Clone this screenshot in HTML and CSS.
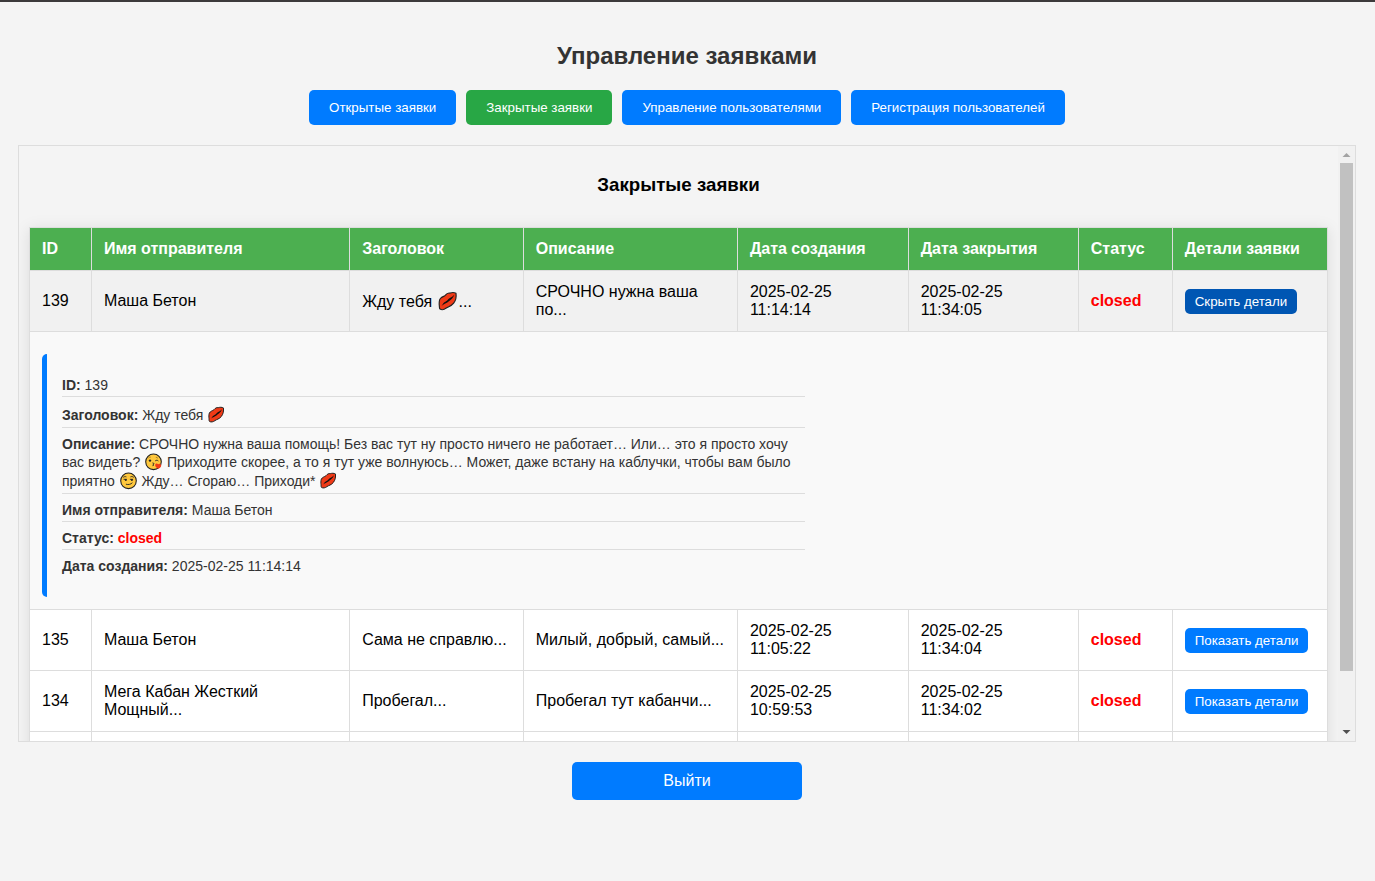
FILE: index.html
```html
<!DOCTYPE html>
<html lang="ru">
<head>
<meta charset="utf-8">
<title>Управление заявками</title>
<link rel="stylesheet" href="styles.css">
</head>
<body>
<svg class="symbols" aria-hidden="true">
  <symbol id="lips" viewBox="0 0 19 19">
    <path d="M1.9 12.6C1.9 10.4 1.7 8.2 3.2 7C4.6 5.7 6 5.7 7.1 4.6C8.4 3 9.8 2.3 11.2 2.7C12.8 2.1 15 2.1 16.4 2.9C16.8 5.6 16.4 8.8 14.4 11.4C12.2 14.2 9.8 14.2 8 15.6C6.2 17 4 17.3 2.6 16.5C1.8 15.8 2.2 14 1.9 12.6Z" fill="#f03a17" stroke="#222" stroke-width="1" stroke-linejoin="round"/>
    <path d="M3.8 13.8C5.2 12.2 5.6 10.6 7.6 9.9C9 9.5 9.4 8 10.8 7.2C12.4 6.4 13.8 5.4 15 4.2C14.2 6 13.4 7.4 11.9 8.4C10.8 9.1 10.2 9.9 8.9 10.8C7.2 11.9 5.4 12.4 3.8 13.8Z" fill="#111"/>
  </symbol>
  <symbol id="kiss" viewBox="0 0 19 19">
    <circle cx="9.5" cy="9.8" r="7.8" fill="#ffc83d" stroke="#222" stroke-width="1.1"/>
    <circle cx="6" cy="8.6" r="1.2" fill="#222"/>
    <path d="M11.2 8.9C12.2 8 13.4 8.1 14.4 9M8.5 10.9C10.2 10.7 10.2 12.1 8.9 12.3C10.2 12.5 10 13.8 8.5 13.7" fill="none" stroke="#222" stroke-width="0.9"/>
    <path d="M4.4 6C5 5.3 5.9 5 6.8 5.1M11.8 5.3C12.7 5.3 13.4 5.7 13.9 6.3" fill="none" stroke="#8a6420" stroke-width="0.7"/>
    <path d="M14.6 16.8C12.2 15.8 10.9 14.3 11.2 12.7C11.6 11.2 13.4 11.1 14.1 12.3C15.1 11.1 17 11.7 17.2 13.2C17.3 14.7 16.2 15.9 14.6 16.8Z" fill="#f03a17"/>
  </symbol>
  <symbol id="smirk" viewBox="0 0 19 19">
    <circle cx="9.5" cy="9.8" r="7.8" fill="#ffc83d" stroke="#222" stroke-width="1.1"/>
    <circle cx="6.8" cy="8.9" r="1" fill="#222"/>
    <circle cx="12.9" cy="8.9" r="1" fill="#222"/>
    <path d="M4.2 6.4C5 5.6 6.2 5.4 7.4 5.9M11.4 5.9C12.6 5.3 13.8 5.5 14.8 6.4M4.6 8.3H7.8M10.9 8.3H14.1M6.9 13.2C9.4 14 11.8 13.4 13.4 11.7" fill="none" stroke="#222" stroke-width="0.9"/>
  </symbol>
</svg>

<main class="page">
  <h1 class="page-title">Управление заявками</h1>
  <nav class="tabs">
    <button class="tab" type="button">Открытые заявки</button>
    <button class="tab tab-active" type="button">Закрытые заявки</button>
    <button class="tab" type="button">Управление пользователями</button>
    <button class="tab" type="button">Регистрация пользователей</button>
  </nav>

  <section class="panel">
    <div class="scroller">
      <h3 class="panel-title">Закрытые заявки</h3>
      <table class="tickets">
        <colgroup>
          <col class="col-id"><col class="col-sender"><col class="col-subject"><col class="col-text">
          <col class="col-created"><col class="col-closed"><col class="col-status"><col class="col-details">
        </colgroup>
        <thead>
          <tr>
            <th>ID</th><th>Имя отправителя</th><th>Заголовок</th><th>Описание</th>
            <th>Дата создания</th><th>Дата закрытия</th><th>Статус</th><th>Детали заявки</th>
          </tr>
        </thead>
        <tbody>
          <tr class="row-open">
            <td>139</td>
            <td>Маша Бетон</td>
            <td>Жду тебя <svg class="emoji" role="img" aria-label="Губы"><use href="#lips"/></svg>...</td>
            <td>СРОЧНО нужна ваша по...</td>
            <td>2025-02-25 11:14:14</td>
            <td>2025-02-25 11:34:05</td>
            <td><span class="status">closed</span></td>
            <td><button class="toggle toggle-open" type="button">Скрыть детали</button></td>
          </tr>
          <tr class="row-details">
            <td colspan="8">
              <div class="details">
                <p><strong>ID:</strong> 139</p>
                <p><strong>Заголовок:</strong> Жду тебя <svg class="emoji emoji-small" role="img" aria-label="Губы"><use href="#lips"/></svg></p>
                <p><strong>Описание:</strong> СРОЧНО нужна ваша помощь! Без вас тут ну просто ничего не работает… Или… это я просто хочу вас видеть? <svg class="emoji emoji-small" role="img" aria-label="Поцелуй"><use href="#kiss"/></svg> Приходите скорее, а то я тут уже волнуюсь… Может, даже встану на каблучки, чтобы вам было приятно <svg class="emoji emoji-small" role="img" aria-label="Ухмылка"><use href="#smirk"/></svg> Жду… Сгораю… Приходи* <svg class="emoji emoji-small" role="img" aria-label="Губы"><use href="#lips"/></svg></p>
                <p><strong>Имя отправителя:</strong> Маша Бетон</p>
                <p><strong>Статус:</strong> <span class="status">closed</span></p>
                <p><strong>Дата создания:</strong> 2025-02-25 11:14:14</p>
              </div>
            </td>
          </tr>
          <tr>
            <td>135</td>
            <td>Маша Бетон</td>
            <td>Сама не справлю...</td>
            <td>Милый, добрый, самый...</td>
            <td>2025-02-25 11:05:22</td>
            <td>2025-02-25 11:34:04</td>
            <td><span class="status">closed</span></td>
            <td><button class="toggle" type="button">Показать детали</button></td>
          </tr>
          <tr>
            <td>134</td>
            <td>Мега Кабан Жесткий Мощный...</td>
            <td>Пробегал...</td>
            <td>Пробегал тут кабанчи...</td>
            <td>2025-02-25 10:59:53</td>
            <td>2025-02-25 11:34:02</td>
            <td><span class="status">closed</span></td>
            <td><button class="toggle" type="button">Показать детали</button></td>
          </tr>
          <tr><td></td><td></td><td></td><td></td><td></td><td></td><td></td><td></td></tr>
        </tbody>
      </table>
    </div>
    <div class="scrollbar" aria-hidden="true">
      <svg class="arrow" viewBox="0 0 17 17"><path d="M4.5 11L8.5 7L12.5 11Z" fill="#a3a3a3"/></svg>
      <div class="track"><div class="thumb"></div></div>
      <svg class="arrow" viewBox="0 0 17 17"><path d="M4.5 6L8.5 10L12.5 6Z" fill="#505050"/></svg>
    </div>
  </section>

  <button class="logout" type="button">Выйти</button>
</main>
</body>
</html>
```
FILE: styles.css
```css
* {
  box-sizing: border-box;
}

body {
  margin: 0;
  min-height: 100vh;
  border-top: 2px solid #3c3a3b;
  background: #f4f4f4;
  font-family: "Liberation Sans", Arial, sans-serif;
}

button {
  border: 0;
  border-radius: 5px;
  background: #007bff;
  color: #fff;
  font-family: inherit;
  cursor: pointer;
}

.symbols {
  display: none;
}

.page {
  display: flex;
  flex-direction: column;
  align-items: center;
  gap: 20px;
  padding: 40px 19px 20px 18px;
}

.page-title {
  margin: 0;
  color: #333;
  font-size: 24px;
  line-height: 28px;
}

.tabs {
  display: flex;
  justify-content: center;
  gap: 10px;
}

.tab {
  padding: 10px 20px;
}

.tab-active {
  background: #28a745;
}

.panel {
  display: flex;
  width: 100%;
  height: calc(100vh - 284px);
  border: 1px solid #ddd;
}

.scroller {
  flex: 1;
  min-width: 0;
  padding: 10px;
  overflow-y: auto;
  scrollbar-width: none;
}

.panel-title {
  margin: 18px 0 31px;
  line-height: 22px;
  text-align: center;
}

.tickets {
  width: 100%;
  table-layout: fixed;
  border-collapse: collapse;
  background: #fff;
  box-shadow: 0 2px 15px rgba(0, 0, 0, 0.1);
}

.col-id { width: 4.77%; }
.col-sender { width: 19.9%; }
.col-subject { width: 13.37%; }
.col-text { width: 16.5%; }
.col-created { width: 13.16%; }
.col-closed { width: 13.1%; }
.col-status { width: 7.24%; }
.col-details { width: 11.96%; }

.tickets th,
.tickets td {
  padding: 12px;
  border: 1px solid #ddd;
  line-height: 18px;
  text-align: left;
}

.tickets th {
  background: #4caf50;
  color: #fff;
}

.row-open td {
  background: #f1f1f1;
}

.tickets .row-details td {
  background: #f9f9f9;
}

.status {
  color: #f00;
  font-weight: bold;
}

.toggle {
  padding: 5px 10px;
  vertical-align: middle;
}

.toggle-open {
  background: #0056b3;
}

.details {
  width: 61.1%;
  margin-top: 10px;
  padding: 15px;
  border-left: 5px solid #007bff;
  border-radius: 5px;
  color: #333;
  font-size: 14px;
  line-height: 16px;
}

.details p {
  margin: 8px 0;
  padding-bottom: 3px;
  border-bottom: 1px solid #ddd;
}

.details p:last-child {
  padding-bottom: 0;
  border-bottom: 0;
}

.emoji {
  width: 22px;
  height: 22px;
  vertical-align: -5px;
}

.emoji-small {
  width: 19px;
  height: 19px;
  vertical-align: -4px;
}

.scrollbar {
  display: flex;
  flex-direction: column;
  width: 17px;
  background: #f1f1f1;
}

.arrow {
  width: 17px;
  height: 17px;
}

.track {
  flex: 1;
  padding: 0 2px;
}

.thumb {
  height: 90.5%;
  background: #c1c1c1;
}

.logout {
  width: 230px;
  padding: 10px;
  font-size: 16px;
  line-height: 18px;
}
```
